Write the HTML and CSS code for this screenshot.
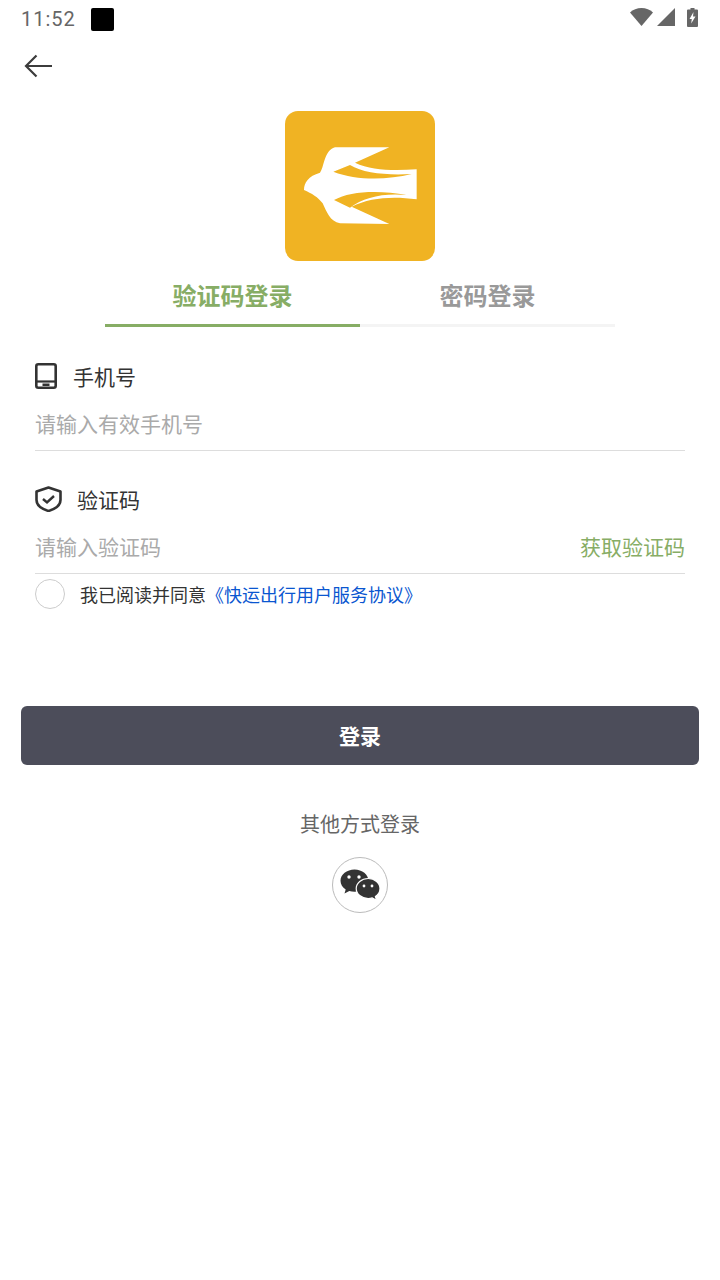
FILE: index.html
```html
<!DOCTYPE html>
<html lang="zh-CN">
<head>
<meta charset="UTF-8">
<meta name="viewport" content="width=device-width, initial-scale=1.0">
<title>验证码登录</title>
<link rel="stylesheet" href="styles.css">
</head>
<body>

<div class="status-bar">
    <span class="time">11:52</span>
    <span class="notify"></span>
    <span class="status-icons">
        <svg class="wifi" width="23" height="18" viewBox="0 0 23 18"><path d="M0 4.500C3 1.500 7 0 11.500 0S20 1.500 23 4.500L11.500 18z" fill="#666"/></svg>
        <svg class="signal" width="18" height="18" viewBox="0 0 18 18"><path d="M0 18L18 0v18z" fill="#666"/></svg>
        <svg class="battery" width="11" height="19" viewBox="0 0 11 19"><path d="M3.500 0h4v1.500H10a1 1 0 0 1 1 1V18a1 1 0 0 1-1 1H1a1 1 0 0 1-1-1V2.500a1 1 0 0 1 1-1h2.500z" fill="#666"/><path d="M6.500 4L2.500 11h2.300l-.6 4.500L8.500 8.500H6z" fill="#fff"/></svg>
    </span>
</div>

<div class="nav">
    <svg width="30" height="24" viewBox="0 0 30 24"><path d="M28 12H2M12.500 1.500L2 12l10.500 10.500" fill="none" stroke="#3c3c3c" stroke-width="2.200"/></svg>
</div>

<div class="logo">
    <svg width="150" height="150" viewBox="-45 -87 450 450">
        <path d="M12 150C12 128 25 108 60 98C72 85 72 30 105 22L268 22L165 68C215 92 280 92 350 88V178C280 168 210 172 155 200L268 252L120 250C90 245 80 215 68 190C55 172 35 160 12 150Z" fill="#fff"/>
        <path d="M100 95L150 75C190 100 260 106 335 102C260 120 170 122 100 95Z" fill="#f0b323"/>
        <path d="M102 180C150 152 240 150 320 165C250 158 190 172 150 203Z" fill="#f0b323"/>
    </svg>
</div>

<div class="tabs">
    <div class="tab active">验证码登录</div>
    <div class="tab">密码登录</div>
</div>

<form class="login-form">
    <div class="field-label">
        <svg class="icon-phone" width="22" height="26" viewBox="0 0 22 26"><rect x="1.300" y="1.300" width="19.400" height="23.400" rx="2" fill="none" stroke="#333" stroke-width="2.600"/><path d="M1.300 18.500h19.400" stroke="#333" stroke-width="2.200"/><rect x="7.500" y="20.500" width="7" height="2.500" fill="#333"/></svg>
        <span class="label-phone">手机号</span>
    </div>
    <div class="field-input">
        <span class="placeholder">请输入有效手机号</span>
    </div>

    <div class="field-label second">
        <svg class="icon-code" width="27" height="26" viewBox="0 0 27 26"><path d="M13.500 1.500L25.500 5.500V14C25.500 19 20 23 13.500 25C7 23 1.500 19 1.500 14V5.500z" fill="none" stroke="#333" stroke-width="2.600" stroke-linejoin="round"/><path d="M8 13l4 3.500 7-6.500" fill="none" stroke="#333" stroke-width="2.400"/></svg>
        <span class="label-code">验证码</span>
    </div>
    <div class="field-input">
        <span class="placeholder">请输入验证码</span>
        <span class="get-code">获取验证码</span>
    </div>

    <div class="agree">
        <span class="radio"></span>
        <span>我已阅读并同意<a class="link">《快运出行用户服务协议》</a></span>
    </div>
</form>

<button type="button" class="login-btn">登录</button>

<div class="other">
    <p>其他方式登录</p>
    <div class="wechat">
        <svg width="42" height="34" viewBox="0 0 42 34">
            <path d="M15.500 1.500C7.800 1.500 1.500 6.500 1.500 12.700c0 3.500 2 6.700 5.200 8.800L5.500 25.500l4.800-2.500c1.600.5 3.300.8 5.200.8 7.700 0 14-5 14-11.100S23.200 1.500 15.500 1.500z" fill="#333"/>
            <path d="M41 20.500c0-5.500-5.200-10-11.800-10s-12 4.500-12 10 5.400 10 12 10c1.400 0 2.700-.2 4-.6l4.300 2.300-1.100-3.700c2.900-1.900 4.600-4.800 4.600-8z" fill="#333" stroke="#fff" stroke-width="1.200"/>
            <circle cx="10" cy="9" r="1.700" fill="#fff"/><circle cx="20" cy="9" r="1.700" fill="#fff"/>
            <circle cx="25" cy="18" r="1.400" fill="#fff"/><circle cx="33" cy="18" r="1.400" fill="#fff"/>
        </svg>
    </div>
</div>

</body>
</html>
```

FILE: styles.css
```css
* {
    box-sizing: border-box;
}
body {
    font-family: "Noto Sans CJK SC", "Noto Sans", sans-serif;
    margin: 0;
    padding: 0;
    background-color: #fff;
    color: #333;
}
.status-bar {
    height: 38px;
    padding: 0 22px 0 21px;
    display: flex;
    align-items: center;
}
.time {
    font-family: Roboto, sans-serif;
    font-size: 20px;
    color: #666;
    letter-spacing: 1px;
}
.notify {
    width: 23px;
    height: 23px;
    margin-left: 15px;
    background-color: #000;
    border-radius: 2px;
}
.status-icons {
    margin-left: auto;
    margin-bottom: 4px;
    display: flex;
    align-items: center;
}
.signal {
    margin-left: 4px;
}
.battery {
    margin-left: 12px;
}
.nav {
    height: 56px;
    padding: 16px 0 0 24px;
}
.logo {
    width: 150px;
    height: 150px;
    margin: 17px auto 0;
    background-color: #f0b323;
    border-radius: 13px;
    overflow: hidden;
}
.logo svg {
    display: block;
}
.tabs {
    display: flex;
    width: 510px;
    margin: 14px auto 0;
}
.tab {
    flex: 1;
    height: 52px;
    line-height: 40px;
    text-align: center;
    font-size: 24px;
    font-weight: 700;
    color: #999;
    border-bottom: 3px solid #f4f4f4;
}
.tab.active {
    color: #87ad65;
    border-bottom-color: #87ad65;
}
.login-form {
    padding: 0 35px;
}
.field-label {
    display: flex;
    align-items: center;
    height: 28px;
    padding-bottom: 2px;
    margin-top: 36px;
    font-size: 21px;
}
.field-label.second {
    margin-top: 35px;
}
.label-phone {
    margin-left: 16px;
}
.label-code {
    margin-left: 15px;
}
.field-input {
    display: flex;
    justify-content: space-between;
    align-items: center;
    height: 60px;
    padding-top: 4px;
    border-bottom: 1px solid #ddd;
    font-size: 21px;
}
.placeholder {
    color: #aaa;
}
.get-code {
    color: #87ad65;
}
.agree {
    display: flex;
    align-items: center;
    margin-top: 5px;
    font-size: 18px;
    color: #333;
}
.radio {
    width: 30px;
    height: 30px;
    margin-right: 15px;
    border: 1px solid #ccc;
    border-radius: 50%;
}
.link {
    color: #0a56d0;
}
.login-btn {
    display: block;
    width: 678px;
    height: 59px;
    margin: 97px auto 0;
    padding: 0 0 2px;
    background-color: #4c4d5a;
    color: #fff;
    border: none;
    border-radius: 6px;
    font-family: inherit;
    font-size: 21px;
    font-weight: 700;
}
.other {
    text-align: center;
}
.other p {
    margin: 43px 0 0;
    font-size: 20px;
    line-height: 32px;
    color: #666;
}
.wechat {
    display: flex;
    align-items: center;
    justify-content: center;
    width: 56px;
    height: 56px;
    margin: 17px auto 0;
    border: 1px solid #bbb;
    border-radius: 50%;
}
```
